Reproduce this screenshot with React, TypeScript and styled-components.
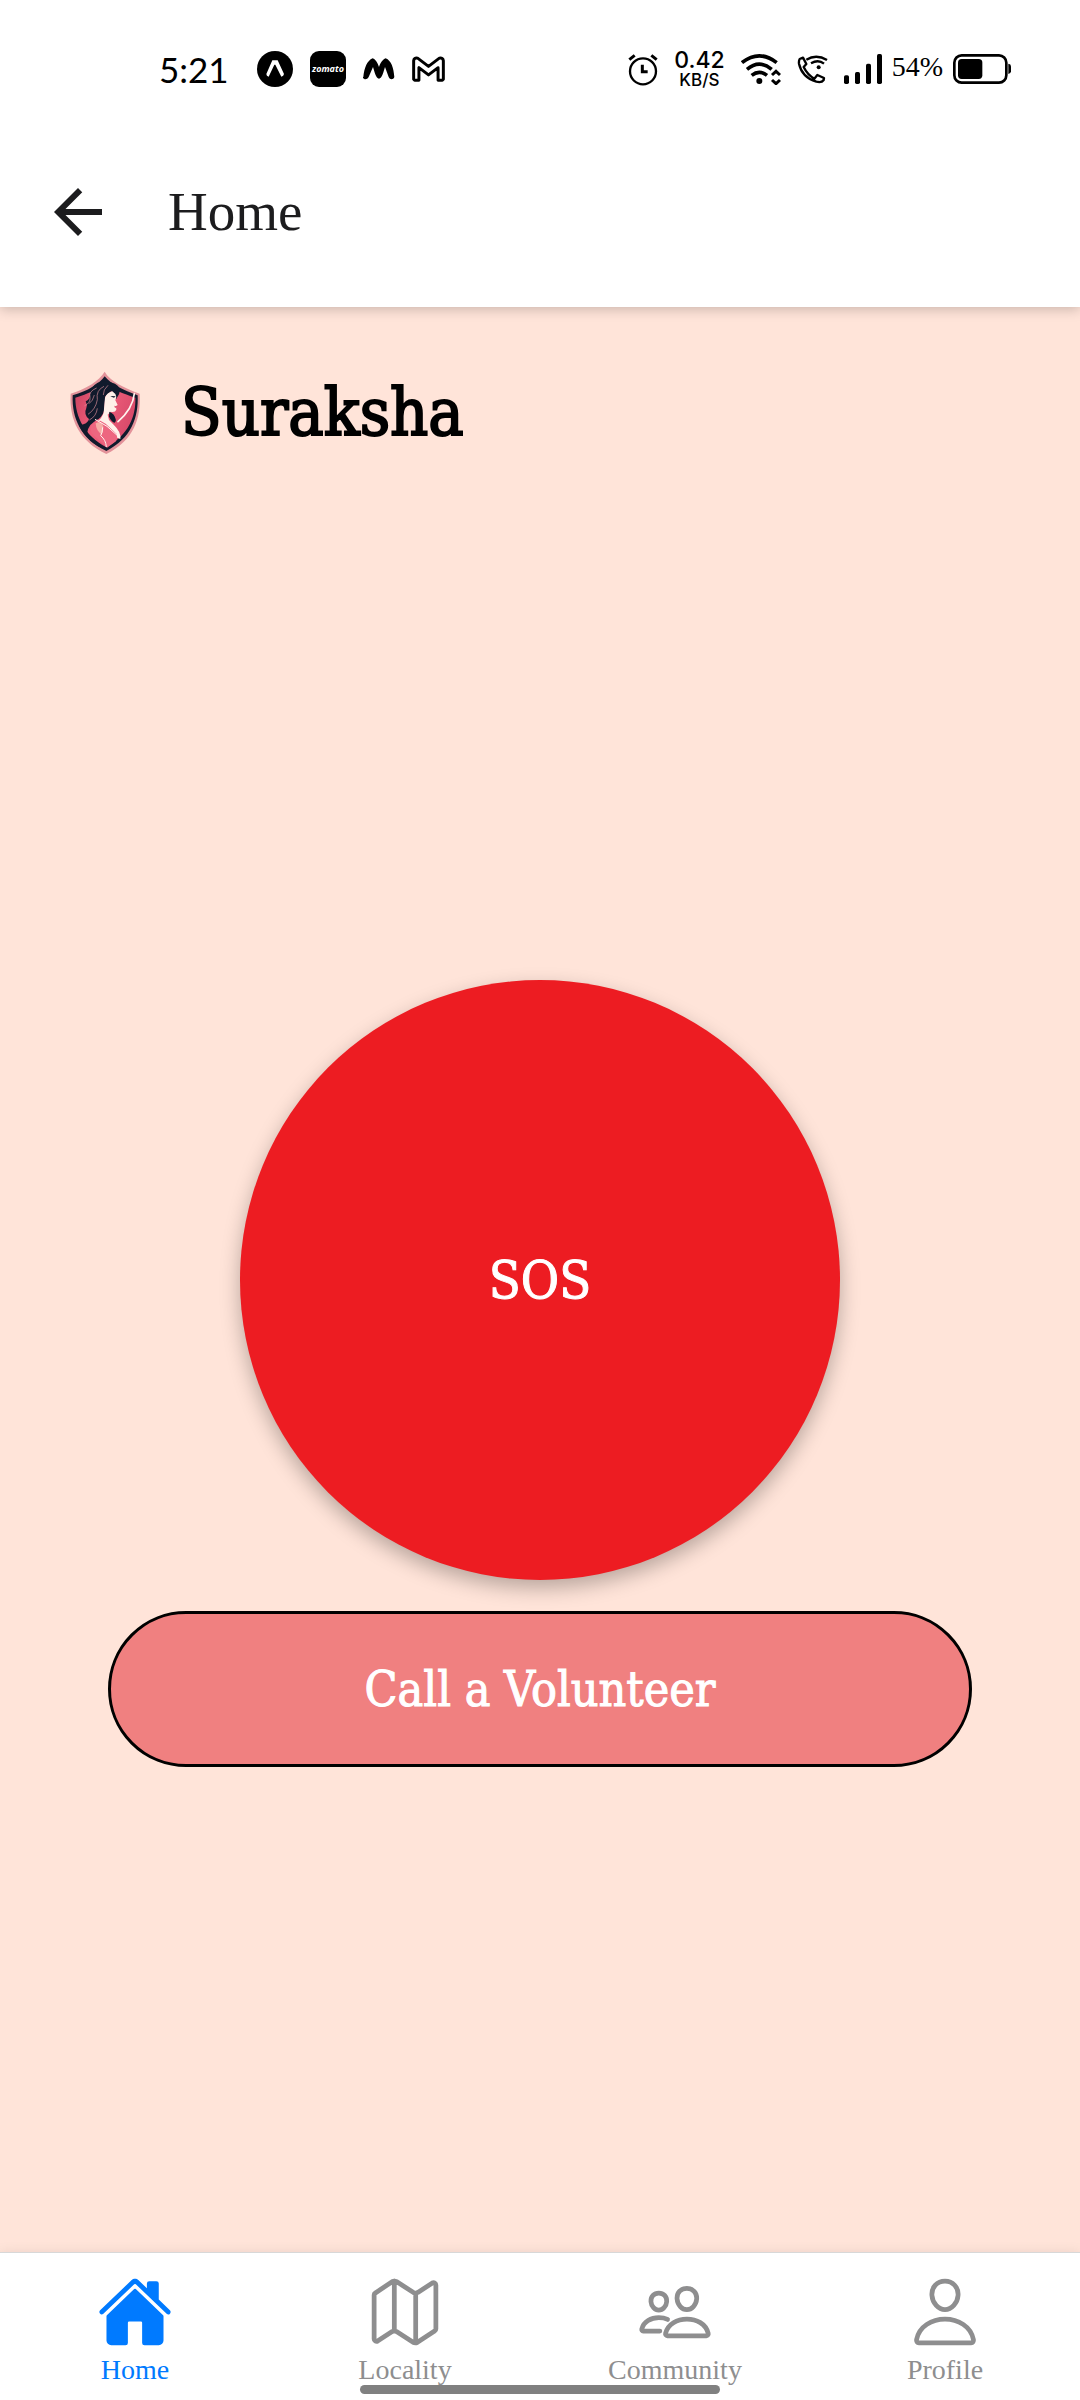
import React from "react";
import styled, { createGlobalStyle } from "styled-components";
import { IoHome, IoMapOutline, IoPeopleOutline, IoPersonOutline } from "react-icons/io5";
import { MdArrowBack } from "react-icons/md";

const slab = `"DejaVu Serif Condensed", "DejaVu Serif", serif`;
const light = `"Liberation Serif", serif`;

const GlobalStyle = createGlobalStyle`
  * { box-sizing: border-box; }
  body { margin: 0; background: #ffe4d9; }
  button { margin: 0; padding: 0; border: 0; background: none; cursor: pointer; }
  svg { display: block; flex: none; }
`;

const Screen = styled.div`
  display: flex;
  flex-direction: column;
  min-height: 100vh;
  background: #ffe4d9;
`;

const Top = styled.header`
  background: #fff;
  box-shadow: 0 2px 12px rgba(0, 0, 0, 0.22);
`;

const StatusBar = styled.div`
  display: flex;
  align-items: center;
  justify-content: space-between;
  height: 116px;
  padding: 22px 69px 0 159px;
`;

const StatusGroup = styled.div<{ $gap: number }>`
  display: flex;
  align-items: center;
  gap: ${(p) => p.$gap}px;
`;

const Clock = styled.time`
  width: 81px;
  font: 400 35px/40px Lato, sans-serif;
  color: #000;
`;

const ZomatoBadge = styled.span`
  display: flex;
  align-items: center;
  justify-content: center;
  width: 36px;
  height: 36px;
  border-radius: 9px;
  background: #000;
  color: #fff;
  font: italic 700 9px/12px "Open Sans", sans-serif;
`;

const Speed = styled.div`
  display: flex;
  flex-direction: column;
  align-items: center;
  color: #000;
  font-family: Inter, sans-serif;
  font-weight: 500;
`;

const SpeedValue = styled.span`
  font-size: 23px;
  line-height: 23px;
`;

const SpeedUnit = styled.span`
  font-size: 17px;
  line-height: 17px;
`;

const Charge = styled.span`
  font: 400 28px/32px ${light};
  color: #000;
  padding-bottom: 4px;
`;

const ChargeGroup = styled.div`
  display: flex;
  align-items: center;
  gap: 10px;
`;

const TitleBar = styled.div`
  display: flex;
  align-items: center;
  gap: 54px;
  height: 191px;
  padding: 0 42px;
`;

const BackButton = styled.button`
  color: #1c1c1e;
`;

const Title = styled.h1`
  margin: 0;
  font: 400 55px/64px ${light};
  color: #1c1c1e;
`;

const Brand = styled.div`
  display: flex;
  align-items: center;
  gap: 31px;
  height: 187px;
  padding: 24px 60px 0;
`;

const BrandName = styled.h2`
  margin: 0;
  font: 400 66px/72px ${slab};
  color: #000;
  -webkit-text-stroke: 2px currentColor;
`;

const Main = styled.main`
  flex: 1;
  display: flex;
  flex-direction: column;
`;

const Actions = styled.section`
  flex: 1;
  display: flex;
  flex-direction: column;
  align-items: center;
  justify-content: center;
  gap: 31px;
`;

const SosButton = styled.button`
  width: 600px;
  max-width: 80%;
  aspect-ratio: 1;
  border-radius: 50%;
  background: #ed1c22;
  color: #fff;
  font: 400 52px/60px ${slab};
  -webkit-text-stroke: 1px currentColor;
  box-shadow: 0 8px 20px rgba(0, 0, 0, 0.28);
`;

const VolunteerButton = styled.button`
  width: 80%;
  height: 156px;
  border: 3px solid #000;
  border-radius: 78px;
  background: #f08080;
  color: #fff;
  font: 400 48px/60px ${slab};
  -webkit-text-stroke: 1px currentColor;
`;

const TabBar = styled.nav`
  position: relative;
  display: flex;
  height: 148px;
  border-top: 1px solid #d8d8d8;
  background: #fff;
  box-shadow: 0 0 12px rgba(0, 0, 0, 0.08);
`;

const Tab = styled.a<{ $active?: boolean }>`
  flex: 1;
  display: flex;
  flex-direction: column;
  align-items: center;
  padding-top: 21px;
  gap: 2px;
  text-decoration: none;
  color: ${(p) => (p.$active ? "#007aff" : "#8e8e8f")};
  font: 400 28px/36px ${light};
`;

const HomeIndicator = styled.div`
  position: absolute;
  left: 33.333%;
  right: 33.333%;
  bottom: 6px;
  height: 9px;
  border-radius: 5px;
  background: #808080;
`;

const ExpoIcon = () => (
  <svg width="36" height="36" viewBox="351 65 108 108" aria-hidden="true">
    <circle cx="405" cy="119" r="54" />
    <path fill="#fff" d="M397 93h16l19 41q-1 7-8 8l-18-36h-3l-17 36q-7-1-7-8z" />
  </svg>
);

const MonogramIcon = () => (
  <svg width="32" height="24" viewBox="670 83 96 72" aria-hidden="true">
    <path d="M671 143C674 116 682 94 699 87c9 3 15 14 19 26 4-12 11-23 20-26 17 7 24 29 26 56-3 9-13 9-17 0l-11-30c-5 16-9 34-18 35-9-1-13-19-18-35l-13 30c-5 9-15 9-18 0z" />
  </svg>
);

const GmailIcon = () => (
  <svg width="33" height="26" viewBox="823 77 100 78" aria-hidden="true">
    <path
      fill="none"
      stroke="#000"
      strokeWidth="9"
      strokeLinejoin="round"
      d="M828 91q1-10 12-8l33 25 33-25q11-2 12 8v56l-3 3h-13v-38l-29 22-29-22v38h-13l-3-3z"
    />
  </svg>
);

const AlarmIcon = () => (
  <svg width="30" height="33" viewBox="57 69 90 99" aria-hidden="true" fill="none" stroke="#000">
    <circle cx="102" cy="124" r="39" strokeWidth="7" />
    <path strokeWidth="9" d="M100 104v21h16M61 89l16-13M127 76l16 13" />
  </svg>
);

const WifiIcon = () => (
  <svg width="40" height="32" viewBox="398 68 120 96" aria-hidden="true" fill="none" stroke="#000" strokeWidth="11">
    <path d="M401 97q52-41 104 0M416 117q37-31 74 0M430 135q23-18 46 0" />
    <circle cx="453" cy="152" r="9" fill="#000" stroke="none" />
    <path strokeWidth="9" d="M491 134l12-11 12 11M491 149l12 11 12-11" />
  </svg>
);

const WifiCallIcon = () => (
  <svg width="31" height="30" viewBox="559 74 93 90" aria-hidden="true" fill="none" stroke="#000" strokeWidth="7">
    <path
      strokeLinejoin="round"
      d="M567 89l10-4 10 19-8 9q11 23 32 35l9-11 20 9-1 6q-6 9-22 5-43-13-52-54-1-9 2-14z"
    />
    <path d="M587 91q30-18 62 1M601 102q22-13 39 1" />
    <circle cx="624" cy="114" r="6" fill="#000" stroke="none" />
  </svg>
);

const SignalIcon = () => (
  <svg width="38" height="30" viewBox="702 72 114 90" aria-hidden="true">
    <rect x="702" y="136" width="15" height="26" rx="5" />
    <rect x="735" y="126" width="15" height="36" rx="5" />
    <rect x="768" y="101" width="15" height="61" rx="5" />
    <rect x="801" y="72" width="15" height="90" rx="5" />
  </svg>
);

const BatteryIcon = () => (
  <svg width="58" height="30" viewBox="1029 72 174 90" aria-hidden="true">
    <rect x="1033" y="76" width="156" height="82" rx="22" fill="none" stroke="#000" strokeWidth="8" />
    <rect x="1044" y="87" width="73" height="60" rx="11" />
    <path d="M1195 101q8 1 8 8v15q0 7-8 8z" />
  </svg>
);

const ShieldLogo = () => (
  <svg width="90" height="95" viewBox="0 0 270 285" role="img" aria-label="Suraksha logo">
    <defs>
      <linearGradient id="shieldFill" x1="0" y1="0" x2="1" y2="0.4">
        <stop offset="0" stopColor="#c9405f" />
        <stop offset="0.5" stopColor="#f0607c" />
        <stop offset="1" stopColor="#d94b6b" />
      </linearGradient>
    </defs>
    <path fill="#e3929a" d="M134 20C150 48 190 68 239 86 243 160 222 226 139 267 58 228 27 164 32 86 80 70 116 49 134 20z" />
    <path fill="#111a2c" d="M134 34C152 57 190 76 233 91 236 158 214 220 139 258 64 221 35 162 38 91 84 77 116 59 134 34z" />
    <path fill="url(#shieldFill)" d="M133 53C155 72 190 86 226 98 228 152 207 208 139 247 74 210 46 157 46 98 84 86 113 74 133 53z" />
    <path fill="#111a2c" d="M113 53q25-9 52 3 21 12 12 32l-9 15-14-25-18 16-4 43q-5 20-24 29l-17 14q-17 24-2 39 24 25 50 37-57-21-83-75 28-3 31-19-17-13-8-33 4-10-2-20 13-6 13-20-3-21 23-36z" />
    <path fill="#fff0e9" d="M157 79q9 5 12 17l-3 10 7 14-5 3 1 11q-4 9-17 6l-9 9 4 16 14 14q23 22 20 43l-10-4q-9-20-35-33l-22-17q11-8 17-25l4-45q6-15 22-19z" />
    <path fill="#ed6680" d="M91 187q7-19 30-20l16 9 33 31q4 12-2 22l-27 19-32-30q-18-12-18-31z" />
    <path fill="#f6ada6" d="M107 175q17-9 23 10 0 15-5 24-17-13-18-34z" />
    <path fill="#111a2c" d="M148 140q16 7 18 20 4 8-2 13-9-1-17-18zM151 93l16 1-5 4q-6-2-11-5z" />
    <path fill="#d94868" d="M163 122l9 3-7 4z" />
    <path fill="none" stroke="#fff3ee" strokeWidth="5" strokeLinecap="round" d="M223 86Q218 132 174 170" />
    <path fill="none" stroke="#fff3ee" strokeWidth="3" d="M105 163l36 21 35 31M128 187q-1 18-6 25 16 13 17 34" />
    <path fill="none" stroke="#d98e98" strokeWidth="2" d="M110 69q-25 10-20 29 2 15-17 25M132 64q-25 12-20 40-5 29-28 44M103 90q-4 18-16 26M112 130q-3 24-24 35M144 61q-15 13-14 29" />
  </svg>
);

const tabs = [
  { label: "Home", Icon: IoHome, active: true },
  { label: "Locality", Icon: IoMapOutline },
  { label: "Community", Icon: IoPeopleOutline },
  { label: "Profile", Icon: IoPersonOutline },
];

export default function App() {
  return (
    <Screen>
      <GlobalStyle />
      <Top>
        <StatusBar>
          <StatusGroup $gap={17}>
            <Clock>5:21</Clock>
            <ExpoIcon />
            <ZomatoBadge>zomato</ZomatoBadge>
            <MonogramIcon />
            <GmailIcon />
          </StatusGroup>
          <StatusGroup $gap={16}>
            <AlarmIcon />
            <Speed>
              <SpeedValue>0.42</SpeedValue>
              <SpeedUnit>KB/S</SpeedUnit>
            </Speed>
            <WifiIcon />
            <WifiCallIcon />
            <ChargeGroup>
              <SignalIcon />
              <Charge>54%</Charge>
              <BatteryIcon />
            </ChargeGroup>
          </StatusGroup>
        </StatusBar>
        <TitleBar>
          <BackButton type="button" aria-label="Back">
            <MdArrowBack size={72} />
          </BackButton>
          <Title>Home</Title>
        </TitleBar>
      </Top>
      <Main>
        <Brand>
          <ShieldLogo />
          <BrandName>Suraksha</BrandName>
        </Brand>
        <Actions>
          <SosButton type="button">SOS</SosButton>
          <VolunteerButton type="button">Call a Volunteer</VolunteerButton>
        </Actions>
      </Main>
      <TabBar>
        {tabs.map(({ label, Icon, active }) => (
          <Tab key={label} href={`#${label.toLowerCase()}`} $active={active}>
            <Icon size={76} />
            {label}
          </Tab>
        ))}
        <HomeIndicator />
      </TabBar>
    </Screen>
  );
}
